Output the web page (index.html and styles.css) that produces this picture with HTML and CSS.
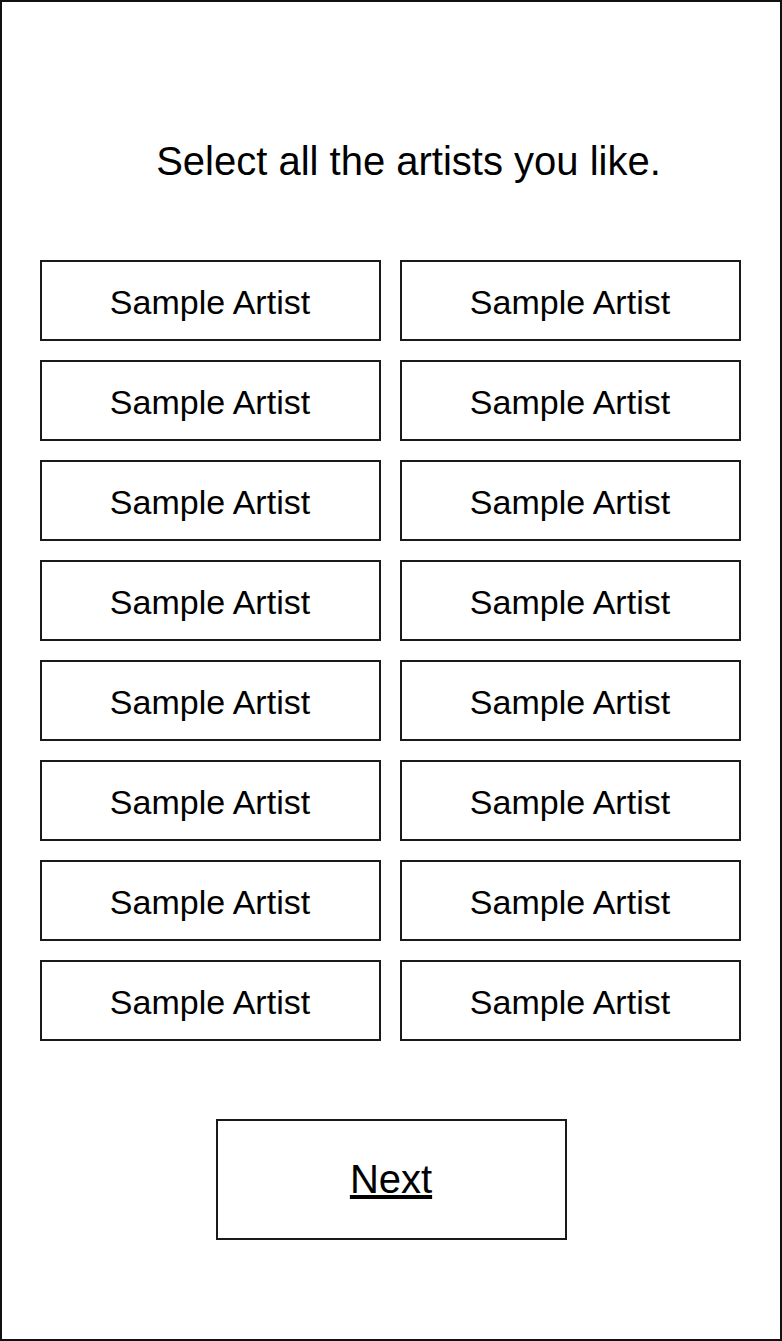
FILE: index.html
```html
<!DOCTYPE html>
<html>
<head>
<meta charset="utf-8">
<link rel="stylesheet" href="styles.css">
</head>
<body>
<div class="frame">
  <h1 class="title">Select all the artists you like.</h1>
  <div class="grid">
    <div class="artist">Sample Artist</div>
    <div class="artist">Sample Artist</div>
    <div class="artist">Sample Artist</div>
    <div class="artist">Sample Artist</div>
    <div class="artist">Sample Artist</div>
    <div class="artist">Sample Artist</div>
    <div class="artist">Sample Artist</div>
    <div class="artist">Sample Artist</div>
    <div class="artist">Sample Artist</div>
    <div class="artist">Sample Artist</div>
    <div class="artist">Sample Artist</div>
    <div class="artist">Sample Artist</div>
    <div class="artist">Sample Artist</div>
    <div class="artist">Sample Artist</div>
    <div class="artist">Sample Artist</div>
    <div class="artist">Sample Artist</div>
  </div>
  <div class="next-wrap">
    <a class="next" href="#">Next</a>
  </div>
</div>
</body>
</html>
```

FILE: styles.css
```css
html, body {
  margin: 0;
  padding: 0;
  background: #fff;
}
body {
  font-family: "Liberation Sans", Arial, Helvetica, sans-serif;
  color: #000;
}
.frame {
  box-sizing: border-box;
  width: 782px;
  height: 1341px;
  border: 2px solid #111;
  display: flex;
  flex-direction: column;
  align-items: center;
}
.title {
  margin: 136px 0 0 35px;
  font-size: 40px;
  font-weight: normal;
  line-height: 46px;
}
.grid {
  margin-top: 76px;
  margin-right: 1px;
  display: grid;
  grid-template-columns: 341px 341px;
  grid-auto-rows: 81px;
  column-gap: 19px;
  row-gap: 19px;
}
.artist {
  box-sizing: border-box;
  border: 2px solid #1a1a1a;
  display: flex;
  align-items: center;
  justify-content: center;
  padding: 3px 1px 0 0;
  font-size: 34px;
}
.next-wrap {
  margin-top: 78px;
}
.next {
  box-sizing: border-box;
  width: 351px;
  height: 121px;
  border: 2px solid #1a1a1a;
  display: flex;
  align-items: center;
  justify-content: center;
  font-size: 40px;
  color: #000;
  text-decoration: underline;
}
```
